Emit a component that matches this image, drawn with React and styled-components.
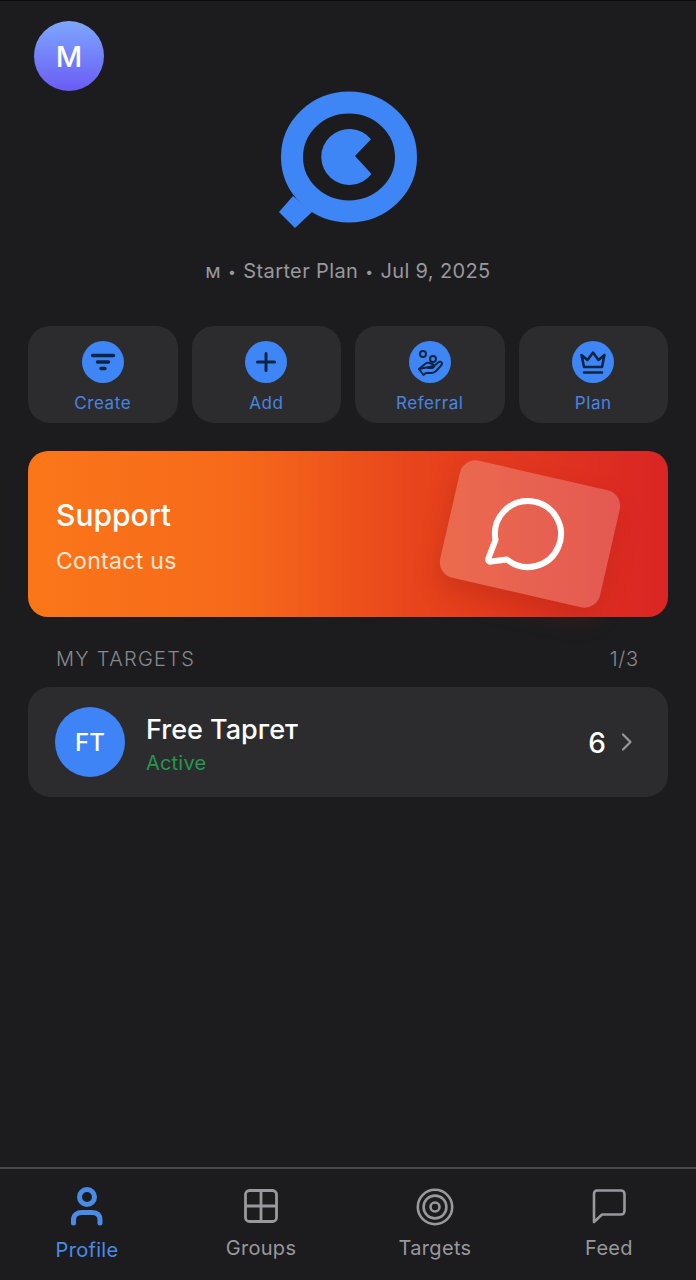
import React from 'react';
import styled, { createGlobalStyle } from 'styled-components';

const Global = createGlobalStyle`
  html, body { margin: 0; padding: 0; background: #1c1c1e; }
  * { box-sizing: border-box; }
  body { font-family: Inter, "Noto Sans", sans-serif; -webkit-font-smoothing: antialiased; }
`;

const Page = styled.div`
  width: 696px; height: 1280px; display: flex; flex-direction: column;
  background: #1c1c1e; border-top: 1px solid #0c0c0d; overflow: hidden;
`;
const Main = styled.main`
  flex: 1; display: flex; flex-direction: column; padding: 20px 28px 0;
`;
const TopBar = styled.div`
  display: flex; padding-left: 6px; height: 70px;
`;
const Avatar = styled.div`
  width: 70px; height: 70px; border-radius: 50%;
  background: linear-gradient(180deg, #7da7ff 0%, #6a5cf4 100%);
  color: #fff; font-size: 29px; font-weight: 500;
  display: flex; align-items: center; justify-content: center;
`;
const Hero = styled.div`
  display: flex; flex-direction: column; align-items: center;
`;
const Logo = styled.svg`
  display: block; width: 150px; height: 140px; margin-left: -2px;
`;
const Meta = styled.div`
  margin-top: 26px; height: 28px; color: #98989d; font-size: 20px; letter-spacing: 0.37px; line-height: 28px; white-space: nowrap;
`;
const Dot = styled.span`
  font-size: 14px; margin: 0 1px; vertical-align: 1px;
`;
const Actions = styled.div`
  display: grid; grid-template-columns: repeat(4, 1fr); gap: 14px; margin-top: 41px;
`;
const Action = styled.div`
  height: 97px; border-radius: 22px; background: #2c2c2e;
  display: flex; flex-direction: column; align-items: center; padding-top: 15px;
`;
const ActionIcon = styled.div`
  width: 42px; height: 42px; border-radius: 50%; background: #3e86f5;
  display: flex; align-items: center; justify-content: center;
`;
const ActionLabel = styled.div`
  margin-top: 9px; color: #4a84e0; font-size: 17px; font-weight: 400; letter-spacing: 0.55px; line-height: 22px;
`;
const Banner = styled.div`
  margin-top: 28px; height: 166px; border-radius: 20px; padding: 0 56px 0 28px;
  background: linear-gradient(90deg, #fb7619 0%, #f6691a 33%, #e8451c 60%, #da2524 100%);
  display: flex; align-items: center; justify-content: space-between;
`;
const BannerText = styled.div`
  display: flex; flex-direction: column; gap: 14px; padding-top: 3px; color: #fff;
`;
const BannerTitle = styled.div`
  font-size: 30px; font-weight: 500; line-height: 36px;
`;
const BannerSub = styled.div`
  font-size: 23px; line-height: 28px; color: #ffe6d4; letter-spacing: 0.3px;
`;
const BannerCard = styled.div`
  width: 164px; height: 120px; border-radius: 16px; background: rgba(255,255,255,0.22);
  transform: rotate(12.9deg);
  box-shadow: 0 12px 24px rgba(150,30,10,0.28);
  display: flex; align-items: center; justify-content: center;
`;
const BubbleIcon = styled.svg`
  display: block; width: 86px; height: 86px; overflow: visible; transform: rotate(-12.9deg);
`;
const SectionHead = styled.div`
  display: flex; justify-content: space-between; align-items: center;
  margin-top: 28px; padding: 0 29px 0 28px; height: 28px;
  color: #8a8a8f; font-size: 20px; font-weight: 300; letter-spacing: 1.3px;
`;
const Count = styled.span`
  letter-spacing: 0.8px;
`;
const Row = styled.div`
  margin-top: 14px; height: 110px; border-radius: 22px; background: #2c2c2e;
  display: flex; align-items: center; padding: 0 34px 0 27px;
`;
const RowAvatar = styled.div`
  width: 70px; height: 70px; border-radius: 50%; background: #3e84f6; color: #fff;
  font-size: 24px; font-weight: 500; display: flex; align-items: center; justify-content: center;
`;
const RowText = styled.div`
  flex: 1; margin-left: 21px; padding-top: 5px; display: flex; flex-direction: column;
`;
const RowTitle = styled.div`
  color: #fff; font-size: 27px; font-weight: 500; line-height: 32px;
`;
const RowStatus = styled.div`
  color: #27964f; font-size: 20px; line-height: 26px; margin-top: 4px; letter-spacing: 0.2px;
`;
const RowCount = styled.div`
  color: #fff; font-size: 28px; font-weight: 500; margin: 2px 14px 0 0;
`;
const Nav = styled.nav`
  height: 113px; border-top: 2px solid #48484a; display: grid; grid-template-columns: repeat(4, 1fr);
`;
const NavItem = styled.div`
  display: flex; flex-direction: column; align-items: center; padding-top: 17px;
  color: ${p => (p.$active ? '#4a8be8' : '#98989d')};
`;
const NavIcon = styled.svg`
  display: block; width: 40px; height: 40px;
`;
const NavLabel = styled.div`
  margin-top: ${p => (p.$active ? 10 : 8)}px; font-size: 20px; line-height: 28px; letter-spacing: 0.3px;
`;
const Glyph = styled.svg`
  display: block; width: 30px; height: 30px;
`;
const Chevron = styled.svg`
  display: block; width: 14px; height: 20px;
`;

const dark = '#0f2442';

export default function App() {
  return (
    <Page>
      <Global />
      <Main>
        <TopBar><Avatar>M</Avatar></TopBar>
        <Hero>
          <Logo viewBox="0 0 150 140">
            <ellipse cx="77" cy="66" rx="57" ry="54.5" fill="none" stroke="#3e86f5" strokeWidth="22" />
            <path d="M21 105 L40 121 L23 137 L7 121 Z" fill="#3e86f5" />
            <path d="M99 48.300 L83 65 L99.500 83 A28 28 0 1 1 99 48.300 Z" fill="#3e86f5" />
          </Logo>
          <Meta>м <Dot>•</Dot> Starter Plan <Dot>•</Dot> Jul 9, 2025</Meta>
        </Hero>
        <Actions>
          <Action>
            <ActionIcon>
              <Glyph viewBox="0 0 30 30" fill="none" stroke={dark} strokeWidth="3.4" strokeLinecap="round">
                <path d="M4.500 8.500H25.500M9.500 15H20.500M13 21.500H17" />
              </Glyph>
            </ActionIcon>
            <ActionLabel>Create</ActionLabel>
          </Action>
          <Action>
            <ActionIcon>
              <Glyph viewBox="0 0 30 30" fill="none" stroke={dark} strokeWidth="3" strokeLinecap="round">
                <path d="M15 6.500V23.500M6.500 15H23.500" />
              </Glyph>
            </ActionIcon>
            <ActionLabel>Add</ActionLabel>
          </Action>
          <Action>
            <ActionIcon>
              <Glyph viewBox="0 0 30 30" fill="none" stroke={dark} strokeWidth="2" strokeLinecap="round" strokeLinejoin="round">
                <circle cx="8" cy="7" r="3" />
                <circle cx="18" cy="12" r="3" />
                <path d="M4 22 L10 17 C12 15.500 14 15.500 16 16.500 L18 17.500 C20 18.500 19 21 17 21 H13" />
                <path d="M19 19 L24 15 C26 14 28 16 26.500 18 L22 23 C20.500 25 18.500 26 16 26 H11 L8.500 28 L4 22 Z" />
              </Glyph>
            </ActionIcon>
            <ActionLabel>Referral</ActionLabel>
          </Action>
          <Action>
            <ActionIcon>
              <Glyph viewBox="0 0 30 30" fill="none" stroke={dark} strokeWidth="2.6" strokeLinecap="round" strokeLinejoin="round">
                <path d="M3.500 8 L9.500 13 L15 5.500 L20.500 13 L26.500 8 L24 20 H6 Z" />
                <path d="M6 25.500H24" />
              </Glyph>
            </ActionIcon>
            <ActionLabel>Plan</ActionLabel>
          </Action>
        </Actions>
        <Banner>
          <BannerText>
            <BannerTitle>Support</BannerTitle>
            <BannerSub>Contact us</BannerSub>
          </BannerText>
          <BannerCard>
            <BubbleIcon viewBox="0 0 86 86" fill="none" stroke="#fff" strokeWidth="6" strokeLinejoin="round" strokeLinecap="round">
              <path d="M8.500 49 L1.500 67 C0.500 69.500 2 71 4 70.500 L20 68.500 A33 33 0 1 0 8.500 49 Z" />
            </BubbleIcon>
          </BannerCard>
        </Banner>
        <SectionHead>
          <span>MY TARGETS</span>
          <Count>1/3</Count>
        </SectionHead>
        <Row>
          <RowAvatar>FT</RowAvatar>
          <RowText>
            <RowTitle>Free Таргет</RowTitle>
            <RowStatus>Active</RowStatus>
          </RowText>
          <RowCount>6</RowCount>
          <Chevron viewBox="0 0 14 20" fill="none" stroke="#98989d" strokeWidth="2.2" strokeLinecap="round" strokeLinejoin="round">
            <path d="M3 2.500 L10.500 10 L3 17.500" />
          </Chevron>
        </Row>
      </Main>
      <Nav>
        <NavItem $active>
          <NavIcon viewBox="0 0 40 40" fill="none" stroke="currentColor" strokeWidth="5" strokeLinecap="round">
            <circle cx="20" cy="11" r="7.500" />
            <path d="M6.500 37 V34 C6.500 29 10 26.500 15 26.500 H25 C30 26.500 33 29 33 34 V37" />
          </NavIcon>
          <NavLabel $active>Profile</NavLabel>
        </NavItem>
        <NavItem>
          <NavIcon viewBox="0 0 40 40" fill="none" stroke="currentColor" strokeWidth="2.8" strokeLinejoin="round">
            <rect x="4.500" y="4.500" width="31" height="31" rx="4" />
            <path d="M20 4.500V35.500M4.500 20H35.500" />
          </NavIcon>
          <NavLabel>Groups</NavLabel>
        </NavItem>
        <NavItem>
          <NavIcon viewBox="0 0 40 40" fill="none" stroke="currentColor" strokeWidth="2.6">
            <circle cx="20" cy="21" r="17.200" />
            <circle cx="20" cy="21" r="11.400" />
            <circle cx="20" cy="21" r="4.500" />
          </NavIcon>
          <NavLabel>Targets</NavLabel>
        </NavItem>
        <NavItem>
          <NavIcon viewBox="0 0 40 40" fill="none" stroke="currentColor" strokeWidth="2.6" strokeLinejoin="round">
            <path d="M8 4.500 H32 C34 4.500 35.500 6 35.500 8 V25 C35.500 27 34 28.500 32 28.500 H13 L5 36 V8 C5 6 6 4.500 8 4.500 Z" />
          </NavIcon>
          <NavLabel>Feed</NavLabel>
        </NavItem>
      </Nav>
    </Page>
  );
}
